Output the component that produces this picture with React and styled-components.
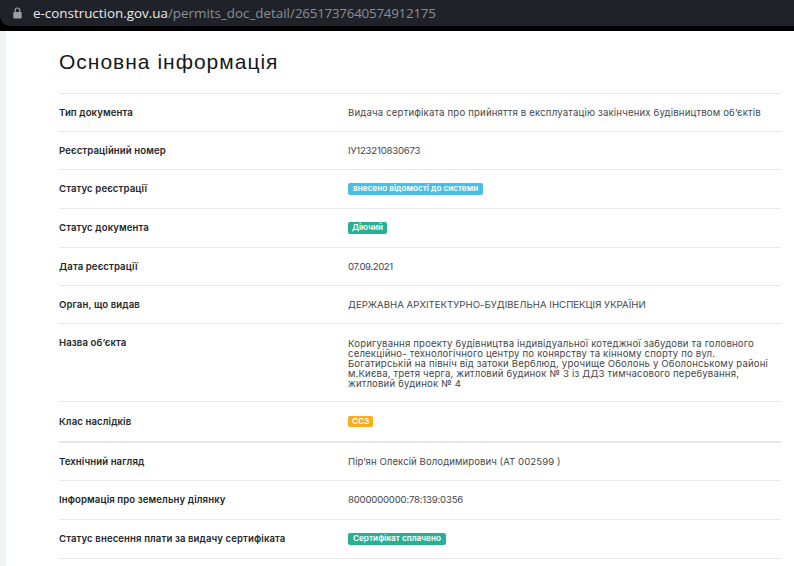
import React from "react";
import styled, { createGlobalStyle } from "styled-components";

const Global = createGlobalStyle`
	html, body {
		margin: 0;
		padding: 0;
		height: 100%;
		overflow: hidden;
		background: #fff;
	}
	body {
		font-family: "Inter", "Liberation Sans", sans-serif;
		color: #3a3d42;
	}
`;

const BrowserBar = styled.div`
	height: 26px;
	background: #000;
	padding-bottom: 5px;
	box-sizing: content-box;
`;

const UrlPill = styled.div`
	height: 26px;
	background: #1f2329;
	display: flex;
	align-items: center;
	padding-left: 13px;
	gap: 11px;
	border-bottom-left-radius: 10px;
	font-family: "Open Sans", "Liberation Sans", sans-serif;
	font-size: 13.4px;
	color: #8b8e93;
	white-space: nowrap;
	overflow: hidden;
`;

const Host = styled.span`
	color: #e8eaed;
`;

const DocId = styled.span`
	letter-spacing: -0.25px;
`;

const Page = styled.div`
	display: flex;
	min-height: calc(100vh - 31px);
`;

const LeftEdge = styled.div`
	width: 6px;
	background: #f2f3f4;
	flex-shrink: 0;
`;

const Content = styled.main`
	flex: 1;
	padding: 0 13px 0 53px;
`;

const Title = styled.h1`
	margin: 0;
	height: 62px;
	display: flex;
	align-items: center;
	font-family: "Liberation Sans", sans-serif;
	font-weight: 400;
	font-size: 21px;
	letter-spacing: 1px;
	color: #16181b;
`;

const List = styled.div`
	border-top: 1px solid #e6e9eb;
`;

const Row = styled.div`
	display: grid;
	grid-template-columns: 289px 1fr;
	align-items: ${(p) => (p.$top ? "start" : "center")};
	height: ${(p) => p.$h}px;
	box-sizing: border-box;
	border-bottom: ${(p) => (p.$thick ? 2 : 1)}px solid #e6e9eb;
	padding-top: ${(p) => (p.$top ? 14 : 0)}px;
`;

const Label = styled.div`
	font-size: 9.6px;
	line-height: 10px;
	font-weight: 600;
	color: #24272b;
	letter-spacing: 0.1px;
`;

const Value = styled.div`
	font-size: 9.6px;
	line-height: 10px;
	color: #44474c;
	letter-spacing: ${(p) => p.$spacing ?? 0.17}px;
	max-width: 425px;
	padding-top: ${(p) => (p.$top ? 1 : 0)}px;
`;

const BadgeCell = styled.div`
	display: flex;
`;

const colors = { blue: "#4bbfe3", green: "#27b193", orange: "#f9ae1f" };

const Badge = styled.span`
	background: ${(p) => colors[p.$color]};
	color: #fff;
	font-size: 8.2px;
	font-weight: 600;
	line-height: 11.5px;
	padding: 0 ${(p) => p.$pad ?? 5}px;
	border-radius: 2px;
`;

const rows = [
	{ label: "Тип документа", h: 38, value: "Видача сертифіката про прийняття в експлуатацію закінчених будівництвом об’єктів" },
	{ label: "Реєстраційний номер", h: 38, spacing: -0.2, value: "ІУ123210830673" },
	{ label: "Статус реєстрації", h: 39, badge: "внесено відомості до системи", color: "blue" },
	{ label: "Статус документа", h: 39, badge: "Діючий", color: "green", pad: 4 },
	{ label: "Дата реєстрації", h: 38, spacing: -0.4, value: "07.09.2021" },
	{ label: "Орган, що видав", h: 38, spacing: 0.03, value: "ДЕРЖАВНА АРХІТЕКТУРНО-БУДІВЕЛЬНА ІНСПЕКЦІЯ УКРАЇНИ" },
	{
		label: "Назва об’єкта",
		h: 78,
		top: true,
		value: "Коригування проекту будівництва індивідуальної котеджної забудови та головного селекційно- технологічного центру по конярству та кінному спорту по вул. Богатирській на північ від затоки Верблюд, урочище Оболонь у Оболонському районі м.Києва, третя черга, житловий будинок № 3 із ДДЗ тимчасового перебування, житловий будинок № 4",
	},
	{ label: "Клас наслідків", h: 41, thick: true, badge: "СС3", color: "orange", pad: 4 },
	{ label: "Технічний нагляд", h: 38, spacing: 0.07, value: "Пір’ян Олексій Володимирович (АТ 002599 )" },
	{ label: "Інформація про земельну ділянку", h: 39, spacing: -0.2, value: "8000000000:78:139:0356" },
	{ label: "Статус внесення плати за видачу сертифіката", h: 39, badge: "Сертифікат сплачено", color: "green" },
];

function App() {
	return (
		<>
			<Global />
			<BrowserBar>
				<UrlPill>
					<svg width="9" height="12" viewBox="0 0 9 12">
						<path d="M2.2 5V3.3a2.3 2.3 0 0 1 4.6 0V5" fill="none" stroke="#9aa0a6" strokeWidth="1.2" />
						<rect x="0.3" y="5" width="8.4" height="6.6" rx="1" fill="#9aa0a6" />
					</svg>
					<span>
						<Host>e-construction.gov.ua</Host>/permits_doc_detail/<DocId>2651737640574912175</DocId>
					</span>
				</UrlPill>
			</BrowserBar>
			<Page>
				<LeftEdge />
				<Content>
					<Title>Основна інформація</Title>
					<List>
						{rows.map((r) => (
							<Row key={r.label} $h={r.h} $top={r.top} $thick={r.thick}>
								<Label>{r.label}</Label>
								{r.badge ? (
									<BadgeCell>
										<Badge $color={r.color} $pad={r.pad}>
											{r.badge}
										</Badge>
									</BadgeCell>
								) : (
									<Value $spacing={r.spacing} $top={r.top}>
										{r.value}
									</Value>
								)}
							</Row>
						))}
					</List>
				</Content>
			</Page>
		</>
	);
}

export default App;
